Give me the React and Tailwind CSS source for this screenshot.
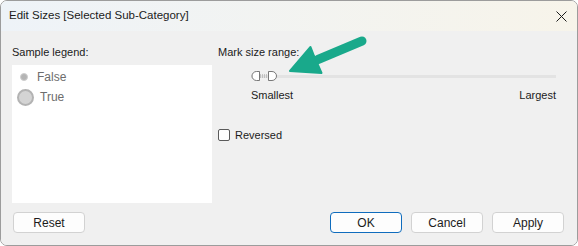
import React from "react";

const font = { fontFamily: '"Segoe UI", "Liberation Sans", Arial, sans-serif' };

function SliderThumbs() {
  return (
    <svg width="28" height="12" viewBox="0 0 28 12" className="shrink-0">
      <path d="M9 5 H17 M9 7 H17" stroke="#9a9a9a" strokeWidth="1" strokeDasharray="1 1" />
      <path d="M5.5 1.5 H8.5 V10.5 H5.5 A4.5 4.5 0 0 1 5.5 1.5 Z" fill="#fff" stroke="#6a6a6a" strokeWidth="0.9" />
      <path d="M17.5 1.5 H21 A4.5 4.5 0 0 1 21 10.5 H17.5 Z" fill="#fff" stroke="#6a6a6a" strokeWidth="0.9" />
    </svg>
  );
}

function Arrow() {
  return (
    <svg
      className="absolute left-0 top-0 pointer-events-none"
      width="578"
      height="246"
      viewBox="0 0 578 246"
    >
      <line x1="362" y1="41" x2="318" y2="59.5" stroke="#19a98b" strokeWidth="9" strokeLinecap="round" />
      <path d="M290 71 L310.5 47 L314 56 L321.5 73 Z" fill="#19a98b" stroke="#19a98b" strokeWidth="2" strokeLinejoin="round" />
    </svg>
  );
}

function Btn({ children, primary }) {
  return (
    <button
      className={`w-[72px] h-[21px] rounded-[4px] bg-[#fdfdfd] text-[12px] text-[#1b1b1b] flex items-center justify-center ${
        primary ? "border border-[#0f6cbd]" : "border border-[#d2d2d2]"
      }`}
      style={font}
    >
      {children}
    </button>
  );
}

export default function App() {
  return (
    <div className="w-[578px] h-[246px] bg-white relative">
      <div className="w-[578px] h-[246px] rounded-[7px] border border-[#9c9c9c] overflow-hidden flex flex-col">
        <div
          className="h-[30px] shrink-0 flex items-center justify-between pl-[8px] pr-[10px] bg-gradient-to-r from-[#eef3f8] to-[#f7f4ea]"
          style={font}
        >
          <span className="text-[11.5px] text-[#1b1b1b]">Edit Sizes [Selected Sub-Category]</span>
          <svg width="11" height="11" viewBox="0 0 11 11">
            <path d="M0.5 0.5 L10.5 10.5 M10.5 0.5 L0.5 10.5" stroke="#1b1b1b" strokeWidth="1" />
          </svg>
        </div>
        <div className="flex-1 bg-[#f0f0f0] flex flex-col pt-[14px] px-[11px]">
          <div className="flex">
            <div className="w-[200px] flex flex-col">
              <div className="h-[14px] text-[11px] leading-[14px] text-[#1b1b1b]" style={font}>
                Sample legend:
              </div>
              <div className="mt-[6px] h-[138px] bg-white pt-[4px] pl-[7px]">
                <div className="flex items-center h-[16px]">
                  <span className="w-[10px] flex justify-center">
                    <span className="w-[8px] h-[8px] rounded-full bg-[#b4b4b4] border border-[#cfcfcf]" />
                  </span>
                  <span className="ml-[8px] text-[12px] text-[#6d6d6d]" style={font}>
                    False
                  </span>
                </div>
                <div className="flex items-center h-[20px] mt-[2px] -ml-[2px]">
                  <span className="w-[17px] h-[17px] rounded-full bg-[#d4d4d4] border-2 border-[#b3b3b3]" />
                  <span className="ml-[6px] text-[12px] text-[#6d6d6d]" style={font}>
                    True
                  </span>
                </div>
              </div>
            </div>
            <div className="flex-1 ml-[6px] mr-[10px] flex flex-col">
              <div className="h-[14px] text-[11px] leading-[14px] text-[#1b1b1b]" style={font}>
                Mark size range:
              </div>
              <div className="mt-[11px] ml-[33px] h-[12px] relative flex items-center">
                <div className="absolute left-0 right-0 top-[5px] h-[3px] bg-[#e3e3e3]" />
                <div className="relative">
                  <SliderThumbs />
                </div>
              </div>
              <div
                className="mt-[6px] ml-[33px] flex justify-between text-[11px] leading-[14px] text-[#1b1b1b]"
                style={font}
              >
                <span>Smallest</span>
                <span>Largest</span>
              </div>
              <div className="mt-[26px] flex items-center">
                <span className="w-[12px] h-[12px] rounded-[2px] border border-[#5a5a5a] bg-white" />
                <span className="ml-[5px] text-[11px] leading-[14px] text-[#1b1b1b]" style={font}>
                  Reversed
                </span>
              </div>
            </div>
          </div>
          <div className="mt-[9px] flex items-center pl-[1px] pr-[2px]">
            <Btn>Reset</Btn>
            <div className="flex-1" />
            <Btn primary>OK</Btn>
            <div className="w-[9px]" />
            <Btn>Cancel</Btn>
            <div className="w-[9px]" />
            <Btn>Apply</Btn>
          </div>
        </div>
      </div>
      <Arrow />
    </div>
  );
}
